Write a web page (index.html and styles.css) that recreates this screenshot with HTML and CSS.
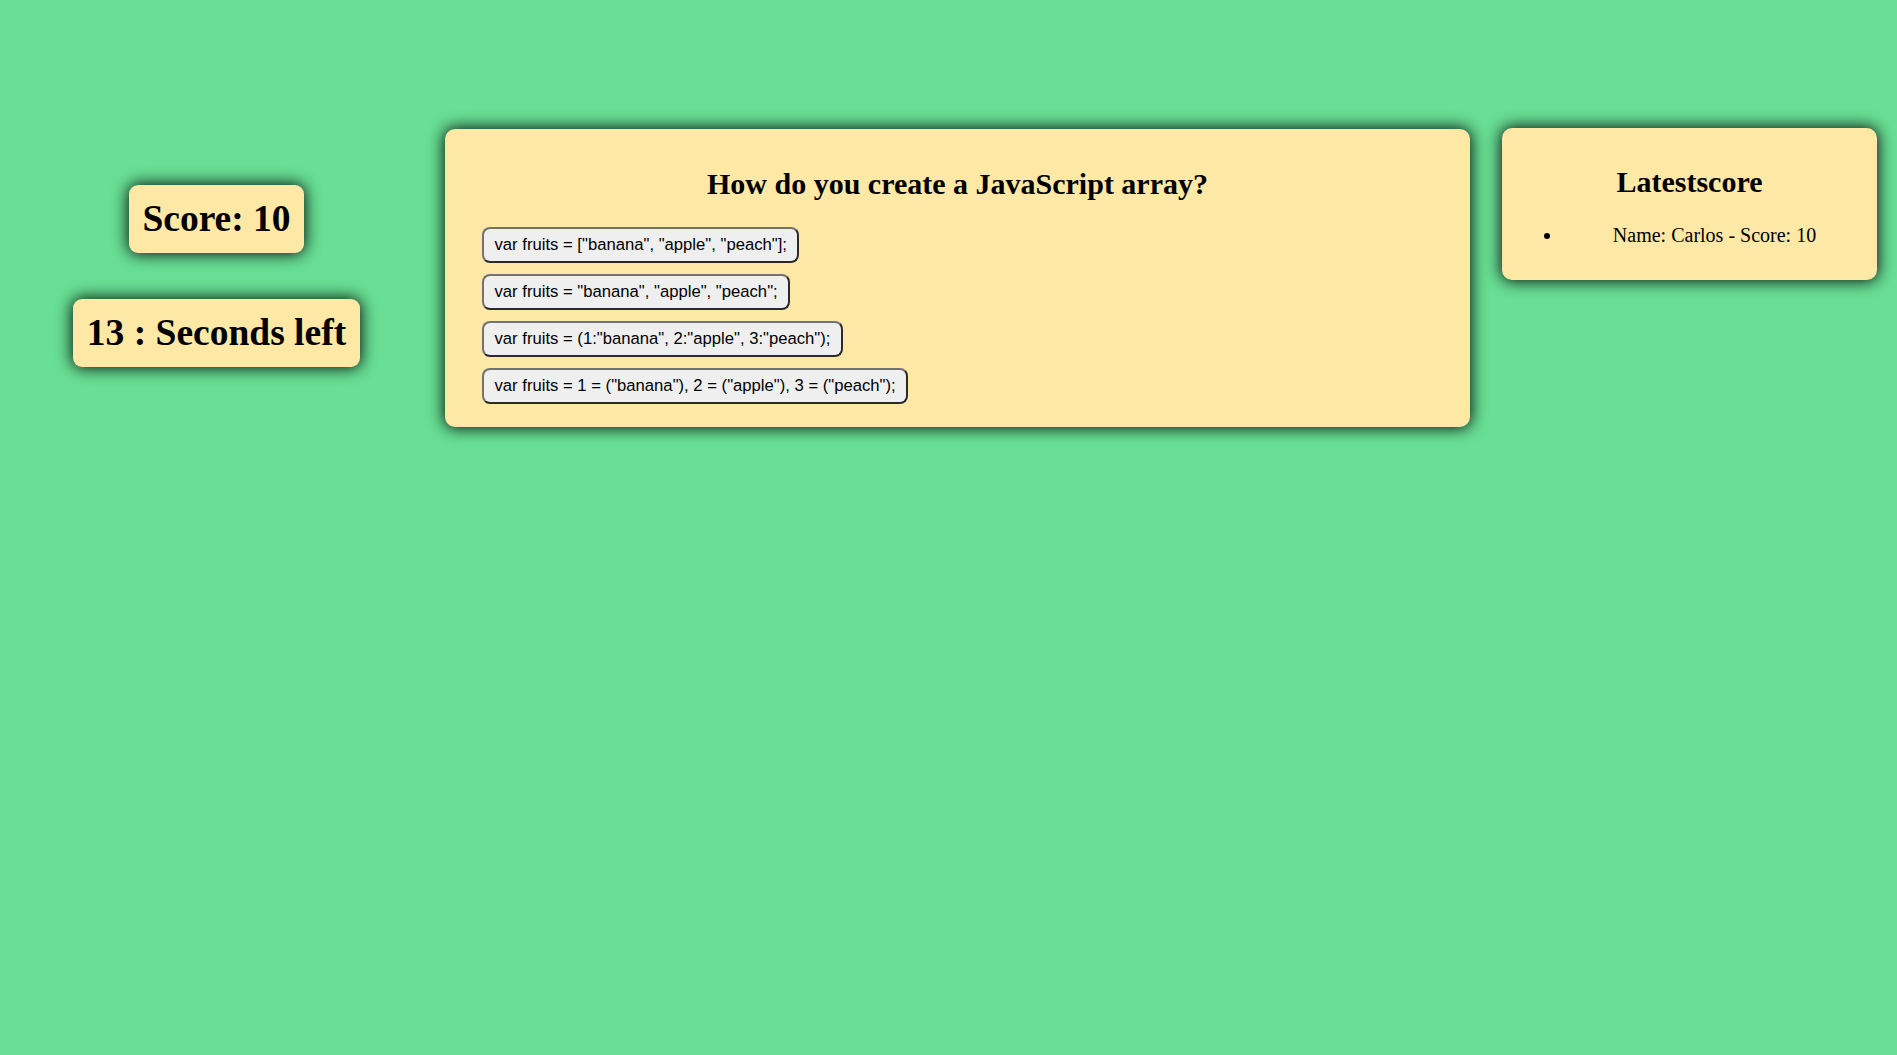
FILE: index.html
```html
<!DOCTYPE html>
<html lang="en">
<head>
<meta charset="utf-8">
<title>Quiz</title>
<link rel="stylesheet" href="styles.css">
</head>
<body>
<div class="page">
  <div class="left-col">
    <h1 class="badge">Score: 10</h1>
    <h1 class="badge">13 : Seconds left</h1>
  </div>
  <section class="card quiz">
    <h2 class="title">How do you create a JavaScript array?</h2>
    <div class="answers">
      <button class="answer">var fruits = ["banana", "apple", "peach"];</button>
      <button class="answer">var fruits = "banana", "apple", "peach";</button>
      <button class="answer">var fruits = (1:"banana", 2:"apple", 3:"peach");</button>
      <button class="answer">var fruits = 1 = ("banana"), 2 = ("apple"), 3 = ("peach");</button>
    </div>
  </section>
  <section class="card scores">
    <h2 class="title">Latestscore</h2>
    <ul class="score-list">
      <li>Name: Carlos - Score: 10</li>
    </ul>
  </section>
</div>
</body>
</html>
```
FILE: styles.css
```css
html, body {
  margin: 0;
  padding: 0;
}
body {
  background: #68df94;
  font-family: "Liberation Serif", "Times New Roman", serif;
  color: #000;
  min-height: 1055px;
}
.page {
  display: flex;
  align-items: flex-start;
}
.left-col {
  width: 433px;
  margin-top: 185px;
  display: flex;
  flex-direction: column;
  align-items: center;
  gap: 46px;
}
.badge {
  margin: 0;
  font-size: 37.5px;
  font-weight: bold;
  line-height: 44px;
  padding: 12px 13.5px;
  background: #fee8a6;
  border-radius: 9px;
  box-shadow: 0 0 16px 1px rgba(0, 0, 0, 0.95);
}
.card {
  box-sizing: border-box;
  background: #fee8a6;
  border-radius: 10px;
  box-shadow: 0 0 16px 1px rgba(0, 0, 0, 0.95);
  padding: 11px;
}
.quiz {
  width: 1025px;
  margin-left: 12px;
  margin-top: 129px;
  padding-bottom: 12px;
}
.scores {
  width: 375px;
  margin-left: 32px;
  margin-top: 128px;
  padding-bottom: 12px;
}
.title {
  margin: 27px 0 25px;
  font-size: 30px;
  font-weight: bold;
  text-align: center;
  line-height: 34.5px;
}
.scores .title {
  margin: 26px 0 24px;
}
.answers {
  display: flex;
  flex-direction: column;
  align-items: flex-start;
  gap: 11px;
  padding-left: 26px;
  padding-bottom: 11px;
}
.answer {
  font-family: "Liberation Sans", Arial, sans-serif;
  font-size: 16.67px;
  line-height: 19px;
  color: #000;
  background: #efefef;
  border: 2px solid;
  border-color: #727272 #2a2a2a #2a2a2a #727272;
  border-radius: 8px;
  padding: 6.5px 10.5px;
  margin: 0;
  cursor: pointer;
}
.score-list {
  margin: 0 0 21px;
  padding-left: 50px;
  font-size: 20px;
  line-height: 23px;
  text-align: center;
}
```
